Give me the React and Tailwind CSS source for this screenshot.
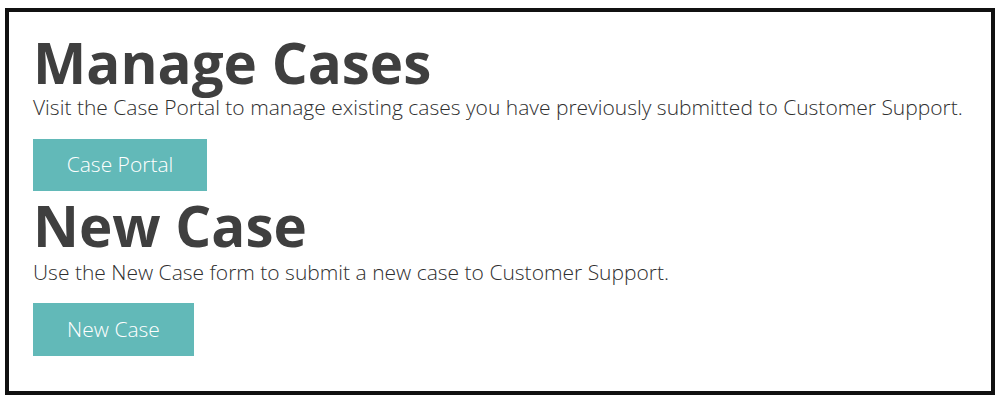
export default function App() {
  return (
    <div className="w-[999px] h-[403px] bg-white pt-[8px] pl-[5px]" style={{ fontFamily: '"Open Sans", sans-serif' }}>
      <div className="w-[990px] h-[387px] border-[4px] border-[#111] bg-white pl-[24px] pt-[23px] text-[#3f3f3f]">
        <h1 className="text-[56.5px] leading-[56px] font-bold">Manage Cases</h1>
        <p className="mt-[1px] text-[21px] leading-[30px] font-light text-[#2f2f2f]">
          Visit the Case Portal to manage existing cases you have previously submitted to Customer Support.
        </p>
        <button className="mt-[17px] h-[52px] w-[174px] bg-[#62b9b8] text-white text-[21px] font-light">
          Case Portal
        </button>
        <h1 className="mt-[7px] text-[56.5px] leading-[56px] font-bold">New Case</h1>
        <p className="mt-[3px] text-[21px] leading-[30px] font-light text-[#2f2f2f]">
          Use the New Case form to submit a new case to Customer Support.
        </p>
        <button className="mt-[16px] h-[53px] w-[161px] bg-[#62b9b8] text-white text-[21px] font-light">
          New Case
        </button>
      </div>
    </div>
  );
}
